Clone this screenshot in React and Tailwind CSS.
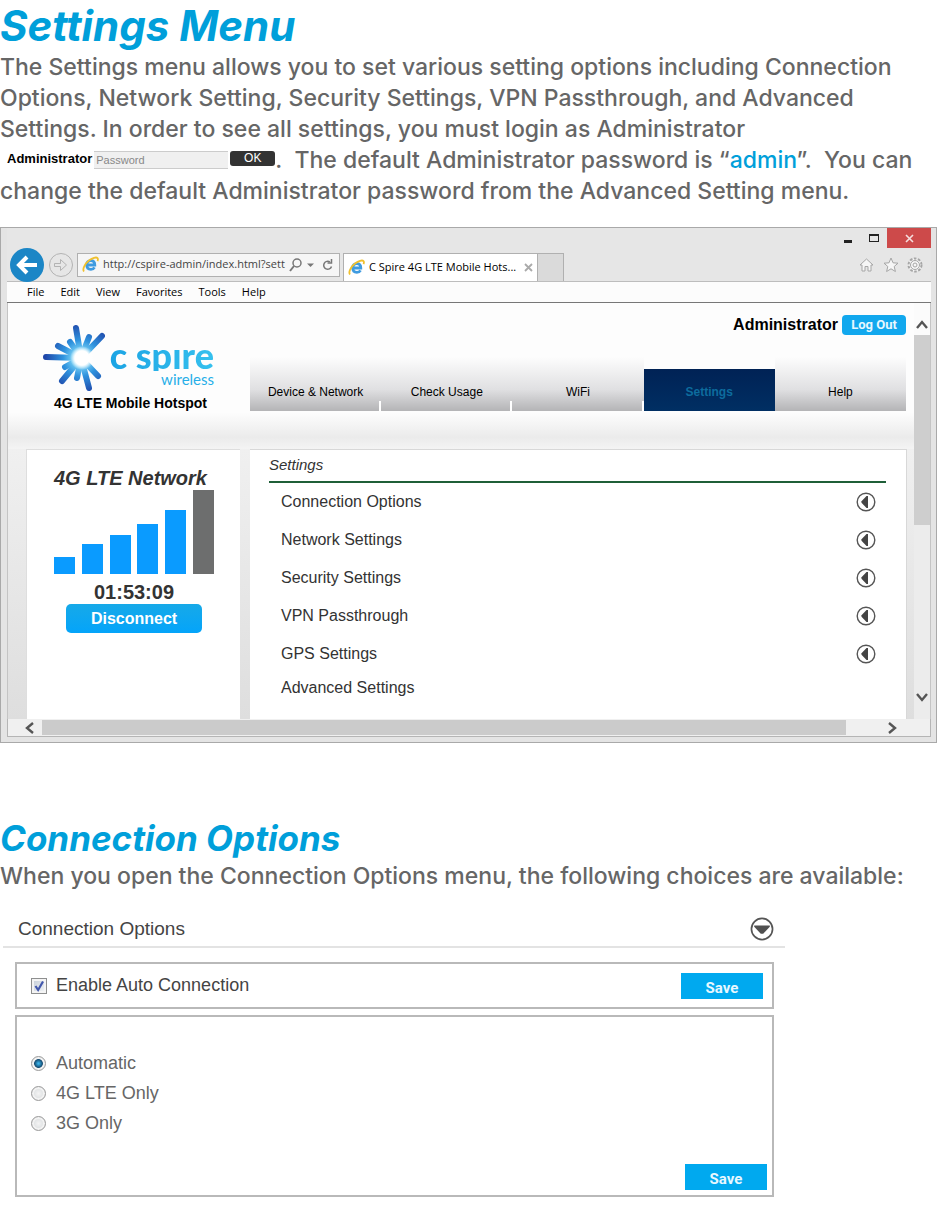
import React, { useState } from "react";

const tabs = ["Device & Network", "Check Usage", "WiFi", "Settings", "Help"];

const menus = ["File", "Edit", "View", "Favorites", "Tools", "Help"];

const settingRows = [
  "Connection Options",
  "Network Settings",
  "Security Settings",
  "VPN Passthrough",
  "GPS Settings",
];

const signal = [17, 30, 39, 50, 64, 84];

const modes = ["Automatic", "4G LTE Only", "3G Only"];

// rays of the logo, as end points around the centre at 40,35
const rays = [
  [35, 5],
  [48, 14],
  [61, 13],
  [29, 19],
  [17, 23],
  [5, 34],
  [24, 44],
  [21, 58],
  [36, 55],
  [48, 65],
  [57, 53],
];

const Sunburst = () => (
  <svg width="64" height="70" viewBox="0 0 64 70" aria-hidden="true">
    <defs>
      <radialGradient id="ray" gradientUnits="userSpaceOnUse" cx="40" cy="35" r="36">
        <stop offset="0.2" stopColor="#7ed6f7" />
        <stop offset="0.5" stopColor="#2f93de" />
        <stop offset="1" stopColor="#1f45a8" />
      </radialGradient>
      <radialGradient id="core">
        <stop offset="0.6" stopColor="#fff" />
        <stop offset="1" stopColor="#fff" stopOpacity="0" />
      </radialGradient>
    </defs>
    <g stroke="url(#ray)" strokeWidth="6" strokeLinecap="round">
      {rays.map(([x, y]) => (
        <line key={`${x}-${y}`} x1="40" y1="35" x2={x} y2={y} />
      ))}
    </g>
    <circle cx="41" cy="35" r="12" fill="url(#core)" />
  </svg>
);

const BrowserLogo = () => (
  <svg width="17" height="17" viewBox="0 0 17 17" fill="none" className="shrink-0" aria-hidden="true">
    <path d="M4.5 9h8.3c0-2.6-1.6-4.4-4-4.4S4.7 6.400 4.700 9c0 2.600 1.700 4.300 4.200 4.300 1.700 0 2.900-.7 3.600-2" stroke="#3f9be0" strokeWidth="2.800" />
    <path d="M2 15.500C.2 13.500 2.500 8 7 4.500c3.500-2.700 7.300-3.700 8.500-2.400.6.7.5 1.800 0 3" stroke="#f0c02e" strokeWidth="1.800" />
  </svg>
);

const Disclosure = ({ open, size }) => (
  <svg width={size} height={size} viewBox="0 0 20 20" className="shrink-0" aria-hidden="true">
    <circle cx="10" cy="10" r="8.800" fill="#fff" stroke="#555" strokeWidth="1.400" />
    {open ? (
      <path d="M3.500 7h13v1.200L11 14H9L3.500 8.200z" fill="#505050" />
    ) : (
      <path d="M12 4v12h-1.500L5.500 10.800V9.200L10.500 4z" fill="#444" />
    )}
  </svg>
);

const Arrow = ({ d }) => (
  <svg width="12" height="12" viewBox="0 0 12 12" fill="none" stroke="#555" strokeWidth="2.400" aria-hidden="true">
    <path d={d} />
  </svg>
);

const SaveButton = ({ className = "" }) => (
  <button
    type="button"
    className={`h-[26px] w-[82px] bg-[#00a9ef] pt-1 font-['Roboto',sans-serif] text-[15px] leading-5 font-bold text-[#e8f8ff] ${className}`}
  >
    Save
  </button>
);

const TitleBar = () => (
  <div className="bg-[#e6e6e6] font-['Open_Sans',sans-serif] text-[11px] text-black">
    <div className="flex h-5 justify-end">
      <button type="button" aria-label="Minimize" className="flex w-7 items-center justify-center">
        <span className="mt-1.5 h-[3px] w-2 bg-[#222]" />
      </button>
      <button type="button" aria-label="Maximize" className="flex w-6 items-center justify-center">
        <span className="h-2 w-2.5 border border-t-2 border-[#222]" />
      </button>
      <button type="button" aria-label="Close" className="ml-px flex w-11 items-center justify-center bg-[#cd4a4a]">
        <svg width="9" height="9" viewBox="0 0 9 9" stroke="#f6dede" strokeWidth="1.600" aria-hidden="true">
          <path d="M1 1l7 7M8 1L1 8" />
        </svg>
      </button>
    </div>

    <div className="flex h-[34px] items-center border-b border-[#bdbdbd]">
      <button type="button" aria-label="Back" className="ml-[3px] shrink-0">
        <svg width="34" height="34" viewBox="0 0 34 34" fill="none" aria-hidden="true">
          <circle cx="17" cy="17" r="17" fill="#1b86c6" />
          <path d="M27 17H10M17 9l-8 8 8 8" stroke="#fff" strokeWidth="4" />
        </svg>
      </button>
      <button type="button" aria-label="Forward" className="ml-1 shrink-0">
        <svg width="26" height="26" viewBox="0 0 26 26" fill="none" stroke="#b3b3b3" aria-hidden="true">
          <circle cx="13" cy="13" r="11.500" />
          <path d="M6.500 11.500h6V7.500l6 5.500-6 5.500v-4h-6z" />
        </svg>
      </button>
      <div className="ml-[3px] flex h-6 w-[263px] shrink-0 items-center border border-[#b0b0b0] bg-[#f6f6f6] px-1">
        <BrowserLogo />
        <input
          aria-label="Address"
          defaultValue="http://cspire-admin/index.html?sett"
          className="ml-1 min-w-0 flex-1 bg-transparent text-[#444] outline-none"
        />
        <svg width="46" height="14" viewBox="0 0 46 14" fill="none" stroke="#777" strokeWidth="1.500" aria-hidden="true">
          <circle cx="8" cy="5" r="4" />
          <path d="M5 8l-4 5" strokeWidth="2" />
          <path d="M18 5.500h7L21.500 9z" fill="#777" stroke="none" />
          <path d="M42.500 8.500a4 4 0 1 1-1.500-4.500" />
          <path d="M42.500 1v4h-4" />
        </svg>
      </div>
      <div className="ml-[3px] flex h-7 w-[195px] shrink-0 items-center self-end border border-b-0 border-[#b0b0b0] bg-white px-1">
        <BrowserLogo />
        <span className="ml-1 whitespace-nowrap">C Spire 4G LTE Mobile Hots...</span>
        <button type="button" aria-label="Close tab" className="ml-auto">
          <svg width="9" height="9" viewBox="0 0 9 9" stroke="#aaa" strokeWidth="1.800" aria-hidden="true">
            <path d="M1 1l7 7M8 1L1 8" />
          </svg>
        </button>
      </div>
      <button type="button" aria-label="New tab" className="h-7 w-[26px] shrink-0 self-end border border-b-0 border-l-0 border-[#b0b0b0] bg-[#dadada]" />
      <svg width="64" height="16" viewBox="0 0 64 16" fill="#f6f6f6" stroke="#a6a6a6" className="mr-2 ml-auto shrink-0" aria-hidden="true">
        <path d="M1 8l6.500-6L14 8h-2v6H9V9.500H6V14H3V8z" />
        <path d="M32 1l2 4.800 5 .4-3.800 3.300 1.200 5L32 11.800 27.600 14.500l1.200-5L25 6.200l5-.4z" />
        <circle cx="56" cy="8" r="6.500" strokeDasharray="2.600 1.500" strokeWidth="2" />
        <circle cx="56" cy="8" r="4.500" />
        <circle cx="56" cy="8" r="2" />
      </svg>
    </div>

    <nav className="flex h-[21px] items-center gap-4 border-b border-[#777] bg-[#fcfcfc] pl-5">
      {menus.map((name) => (
        <button key={name} type="button">
          {name}
        </button>
      ))}
    </nav>
  </div>
);

const PageHeader = () => (
  <header className="flex h-[146px] bg-linear-to-b from-[#fdfdfd] from-75% via-[#ebebeb] via-92% to-[#f4f4f4]">
    <div className="flex w-[242px] shrink-0 flex-col pt-5 pl-[33px]">
      <div className="flex h-[70px]">
        <Sunburst />
        <div className="flex w-[109px] flex-col items-end pt-4 font-['Lato',sans-serif]">
          <span className="bg-linear-to-r from-[#1ba4e4] to-[#35c0ee] bg-clip-text text-[36px] leading-8 font-black whitespace-nowrap text-transparent">
            c spıre
          </span>
          <span className="text-[15px] leading-4 text-[#27afe8]">wireless</span>
        </div>
      </div>
      <p className="ml-[13px] text-[14px] leading-5 font-bold whitespace-nowrap text-black">4G LTE Mobile Hotspot</p>
    </div>

    <div className="mr-2 flex min-w-0 flex-1 flex-col">
      <div className="flex items-center justify-end gap-1 pt-3">
        <span className="text-[16px] leading-5 font-bold text-black">Administrator</span>
        <button
          type="button"
          className="h-5 w-16 rounded-sm bg-[#12a8ee] font-['Roboto',sans-serif] text-[13px] leading-5 font-bold text-[#e8f8ff]"
        >
          Log Out
        </button>
      </div>
      <nav className="mt-[22px] grid grid-cols-5 text-[12px] text-black">
        {tabs.map((name) =>
          name === "Settings" ? (
            <a
              key={name}
              href="#settings"
              className="mt-3 flex h-[42px] items-center justify-center bg-linear-to-b from-[#002255] to-[#002f63] pt-1 font-bold text-[#0d6c9e]"
            >
              {name}
            </a>
          ) : (
            <a
              key={name}
              href="#"
              className="relative flex h-[54px] items-center justify-center bg-linear-to-b from-[#fdfdfd] via-[#e0e0e2] via-60% to-[#b4b4b6] pt-4 after:absolute after:right-0 after:bottom-0 after:h-2.5 after:w-0.5 after:bg-white last:after:hidden"
            >
              {name}
            </a>
          )
        )}
      </nav>
    </div>
  </header>
);

const StatusPanel = () => (
  <aside className="flex w-[214px] shrink-0 flex-col items-center border-t border-l border-[#dedede] bg-white pt-[18px] pl-px">
    <div className="w-40">
      <h2 className="text-[20px] leading-5 font-bold whitespace-nowrap text-[#333] italic">4G LTE Network</h2>
      <div className="mt-0.5 flex h-[84px] items-end justify-between">
        {signal.map((height, i) => (
          <span
            key={height}
            className={`w-[21px] ${i < 5 ? "bg-[#0a9bff]" : "bg-[#6d6e6e]"}`}
            style={{ height }}
          />
        ))}
      </div>
    </div>
    <p className="mt-2 text-[20px] leading-5 font-bold text-[#333]">01:53:09</p>
    <button
      type="button"
      className="mt-0.5 h-[29px] w-[136px] rounded-[5px] bg-linear-to-b from-[#16a9e8] to-[#04a4fa] text-[16px] font-bold text-white"
    >
      Disconnect
    </button>
  </aside>
);

const SettingsPanel = () => (
  <main className="mr-[7px] min-w-0 flex-1 border-t border-r border-[#d8d8d8] bg-white pr-5 pl-[19px] text-[16px] text-[#333]">
    <h2 className="border-b-2 border-[#1f5f38] pt-1 pb-[5px] text-[15px] leading-[22px] italic">Settings</h2>
    {settingRows.map((name) => (
      <button key={name} type="button" className="flex h-[38px] w-full items-center justify-between pr-2.5 pl-3">
        {name}
        <Disclosure size={20} />
      </button>
    ))}
    <button type="button" className="flex h-[30px] items-center pl-3">
      Advanced Settings
    </button>
  </main>
);

const BrowserWindow = () => (
  <div className="mr-1.5 border border-[#a9a9a9] bg-[#e4e4e4] pr-[5px] pb-[5px] pl-[6px]">
    <TitleBar />
    <div className="flex border-x border-[#c4c4c4]">
      <div className="min-w-0 flex-1">
        <PageHeader />
        <div className="flex h-[270px] gap-2.5 bg-linear-to-b from-[#f0f0f0] to-[#dedede] pl-[18px]">
          <StatusPanel />
          <SettingsPanel />
        </div>
      </div>
      <div className="flex w-4 shrink-0 flex-col items-center justify-between bg-[#ececec]">
        <span className="flex h-8 w-full items-end justify-center bg-[#fbfbfb] pb-1">
          <Arrow d="M1 9l5-6 5 6" />
        </span>
        <span className="w-full basis-[190px] bg-[#cecece]" />
        <span className="flex flex-1 items-end pb-4">
          <Arrow d="M1 3l5 6 5-6" />
        </span>
      </div>
    </div>
    <div className="flex h-[18px] items-center border-x border-b border-[#b5b5b5] bg-[#f0f0f0] pr-8 pl-4">
      <Arrow d="M9 1L3 6l6 5" />
      <span className="mr-10 ml-1.5 h-[15px] flex-1 bg-[#cbcbcb]" />
      <Arrow d="M3 1l6 5-6 5" />
    </div>
  </div>
);

const ConnectionPanel = () => {
  const [auto, setAuto] = useState(true);
  const [mode, setMode] = useState(modes[0]);

  return (
    <div className="mt-4 ml-[3px] w-full max-w-[782px] text-[18px] text-[#444]">
      <div className="flex h-10 items-center justify-between border-b-2 border-[#e3e3e3] pt-1 pr-[11px] pl-[15px]">
        <h3 className="text-[19px]">Connection Options</h3>
        <Disclosure open size={24} />
      </div>

      <div className="mt-3.5 mr-[11px] ml-3 flex h-[47px] items-center border-2 border-[#b9b9b9] pr-[9px] pl-3.5">
        <label className="relative flex items-center gap-[9px]">
          <input
            type="checkbox"
            checked={auto}
            onChange={(e) => setAuto(e.target.checked)}
            className="h-4 w-4 appearance-none border border-[#8e8f8f] bg-linear-to-br from-[#c4ccd6] to-[#f4f6f8] shadow-[inset_0_0_0_2px_#f4f4f4]"
          />
          {auto && (
            <svg width="16" height="16" viewBox="0 0 16 16" fill="none" className="pointer-events-none absolute left-0" aria-hidden="true">
              <path d="M4.500 8l2.600 4L12 3.500" stroke="#4257ac" strokeWidth="2.200" />
            </svg>
          )}
          Enable Auto Connection
        </label>
        <SaveButton className="ml-auto" />
      </div>

      <div className="mt-1.5 mr-[11px] ml-3 flex flex-col border-2 border-[#b9b9b9] pt-[31px] pr-[5px] pb-[5px] pl-3.5 text-[#666]">
        {modes.map((name) => (
          <label key={name} className="flex h-[30px] items-center gap-2.5">
            <input
              type="radio"
              name="mode"
              checked={mode === name}
              onChange={() => setMode(name)}
              className="h-[15px] w-[15px] appearance-none rounded-full border border-[#9a9a9a] bg-radial from-[#f4f4f4] to-[#cfd3d6] shadow-[inset_0_0_0_2px_#f2f2f2] checked:bg-radial checked:from-[#3cb4ea] checked:from-5% checked:via-[#134a70] checked:via-45% checked:to-[#e4e8ea] checked:to-58%"
            />
            {name}
          </label>
        ))}
        <SaveButton className="mt-[26px] ml-auto" />
      </div>
    </div>
  );
};

export default function App() {
  return (
    <div className="min-h-screen overflow-x-hidden bg-white font-['Liberation_Sans',Arial,sans-serif]">
      <section className="font-['Inter',sans-serif]">
        <h1 className="pt-1 text-[42px] leading-[44px] font-bold text-[#009fda] italic">Settings Menu</h1>
        <p className="mt-1 text-[23px] leading-[31px] font-medium whitespace-nowrap text-[#666]">
          The Settings menu allows you to set various setting options including Connection
          <br />
          Options, Network Setting, Security Settings, VPN Passthrough, and Advanced
          <br />
          Settings. In order to see all settings, you must login as Administrator
          <br />
          <span className="mb-1 inline-flex h-[18px] items-start pl-[7px] align-middle font-['Liberation_Sans',Arial,sans-serif] text-[13px] leading-4">
            <label htmlFor="password" className="font-bold text-black">
              Administrator
            </label>
            <input
              id="password"
              type="password"
              placeholder="Password"
              className="ml-0.5 h-[18px] w-[134px] border-y border-[#ccc] bg-[#f0f0f0] px-0.5 text-[11px] placeholder:text-[#888]"
            />
            <button type="button" className="ml-0.5 h-[15px] w-[45px] rounded-[3px] bg-[#333] text-[12px] leading-[15px] text-white">
              OK
            </button>
          </span>
          .&nbsp; The default Administrator password is “<span className="text-[#009fda]">admin</span>”.&nbsp; You can
          <br />
          change the default Administrator password from the Advanced Setting menu.
        </p>
      </section>

      <div className="mt-5">
        <BrowserWindow />
      </div>

      <section className="mt-[76px] font-['Inter',sans-serif]">
        <h2 className="text-[35px] leading-[38px] font-bold text-[#009fda] italic">Connection Options</h2>
        <p className="mt-1 text-[23px] leading-[31px] font-medium whitespace-nowrap text-[#666]">
          When you open the Connection Options menu, the following choices are available:
        </p>
      </section>

      <ConnectionPanel />
    </div>
  );
}
